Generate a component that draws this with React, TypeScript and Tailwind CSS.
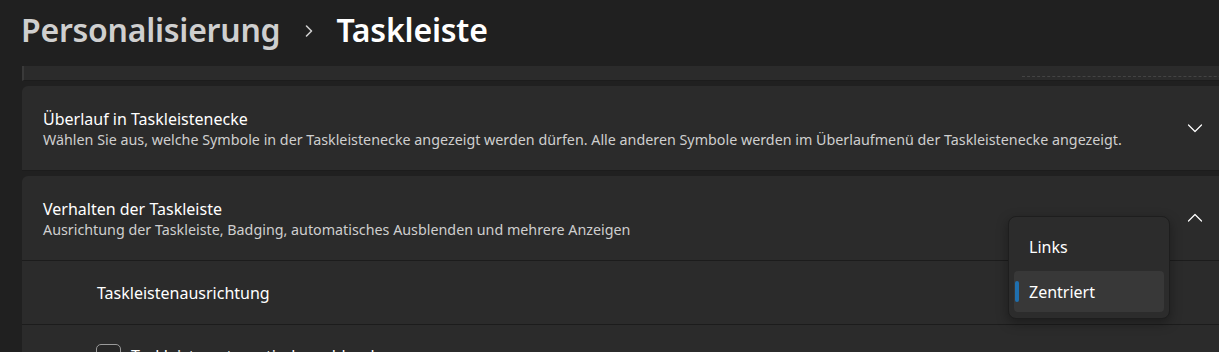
import React from 'react';

const Chevron = ({ up = false }: { up?: boolean }) => (
  <svg width="16" height="16" viewBox="0 0 16 16" className="text-white">
    <path
      d={up ? 'M1.5 11 L8 4.5 L14.5 11' : 'M1.5 5 L8 11.5 L14.5 5'}
      fill="none"
      stroke="currentColor"
      strokeWidth="1.2"
      strokeLinecap="round"
      strokeLinejoin="round"
    />
  </svg>
);

const CardHeader = ({ title, desc, up }: { title: string; desc: string; up?: boolean }) => (
  <div className="flex items-center justify-between pl-[21px] pr-[49px] h-[84px]">
    <div className="flex flex-col pt-[2px]">
      <span className="text-[16px] leading-[22px] text-white">{title}</span>
      <span className="text-[14.3px] leading-[20px] text-[#cfcfcf]">{desc}</span>
    </div>
    <Chevron up={up} />
  </div>
);

export default function App() {
  return (
    <div
      className="relative w-[1219px] h-[352px] overflow-hidden bg-[#202020]"
      style={{ fontFamily: '"Noto Sans", "Open Sans", sans-serif' }}
    >
      <div className="h-[66px] pl-[21px] flex items-center pb-[6px]">
        <span className="text-[32px] font-semibold text-[#cfcfcf] tracking-[-0.25px]">Personalisierung</span>
        <svg width="10" height="14" viewBox="0 0 10 14" className="ml-[24px] mr-[22px] mt-[2px] text-[#cfcfcf]">
          <path d="M2.5 2 L7.5 7 L2.5 12" fill="none" stroke="currentColor" strokeWidth="1.6" strokeLinecap="round" strokeLinejoin="round" />
        </svg>
        <span className="text-[32px] font-semibold text-white tracking-[-0.2px]">Taskleiste</span>
      </div>

      <div className="ml-[22px] w-[1230px] flex flex-col gap-[5px]">
        <div className="relative h-[15px] bg-[#2b2b2b] border-l-2 border-[#3a3a3a] border-b border-b-[#1c1c1c]">
          <div className="absolute right-0 top-[10px] w-[230px] border-t border-dashed border-[#444]" />
        </div>

        <div className="rounded-t-[6px] bg-[#2b2b2b] border-b border-[#1c1c1c]">
          <CardHeader
            title="Überlauf in Taskleistenecke"
            desc="Wählen Sie aus, welche Symbole in der Taskleistenecke angezeigt werden dürfen. Alle anderen Symbole werden im Überlaufmenü der Taskleistenecke angezeigt."
          />
        </div>

        <div className="rounded-t-[6px] bg-[#2b2b2b]">
          <CardHeader
            title="Verhalten der Taskleiste"
            desc="Ausrichtung der Taskleiste, Badging, automatisches Ausblenden und mehrere Anzeigen"
            up
          />
          <div className="border-t border-[#1c1c1c] h-[64px] pl-[75px] flex items-center">
            <span className="text-[16px] text-white">Taskleistenausrichtung</span>
          </div>
          <div className="border-t border-[#1c1c1c] h-[64px] pl-[74px] pt-[19px] flex items-start gap-[10px]">
            <div className="w-[25px] h-[25px] rounded-[5px] border border-[#9a9a9a] bg-[#272727] shrink-0" />
            <span className="text-[16px] text-white leading-[22px] pt-[1px]">Taskleiste automatisch ausblenden</span>
          </div>
        </div>
      </div>

      <div className="absolute left-[1008px] top-[216px] w-[162px] h-[103px] rounded-[8px] bg-[#2c2c2c] border border-[#1e1e1e] shadow-[0_4px_12px_rgba(0,0,0,0.35)] px-[5px] pt-[9px] flex flex-col gap-[4px]">
        <div className="h-[41px] flex items-center pl-[15px]">
          <span className="text-[16px] text-white">Links</span>
        </div>
        <div className="relative h-[41px] flex items-center pl-[15px] rounded-[4px] bg-[#383838]">
          <div className="absolute left-[1px] top-[10px] w-[4px] h-[21px] rounded-full bg-[#1f6fae]" />
          <span className="text-[16px] text-white">Zentriert</span>
        </div>
      </div>
    </div>
  );
}
